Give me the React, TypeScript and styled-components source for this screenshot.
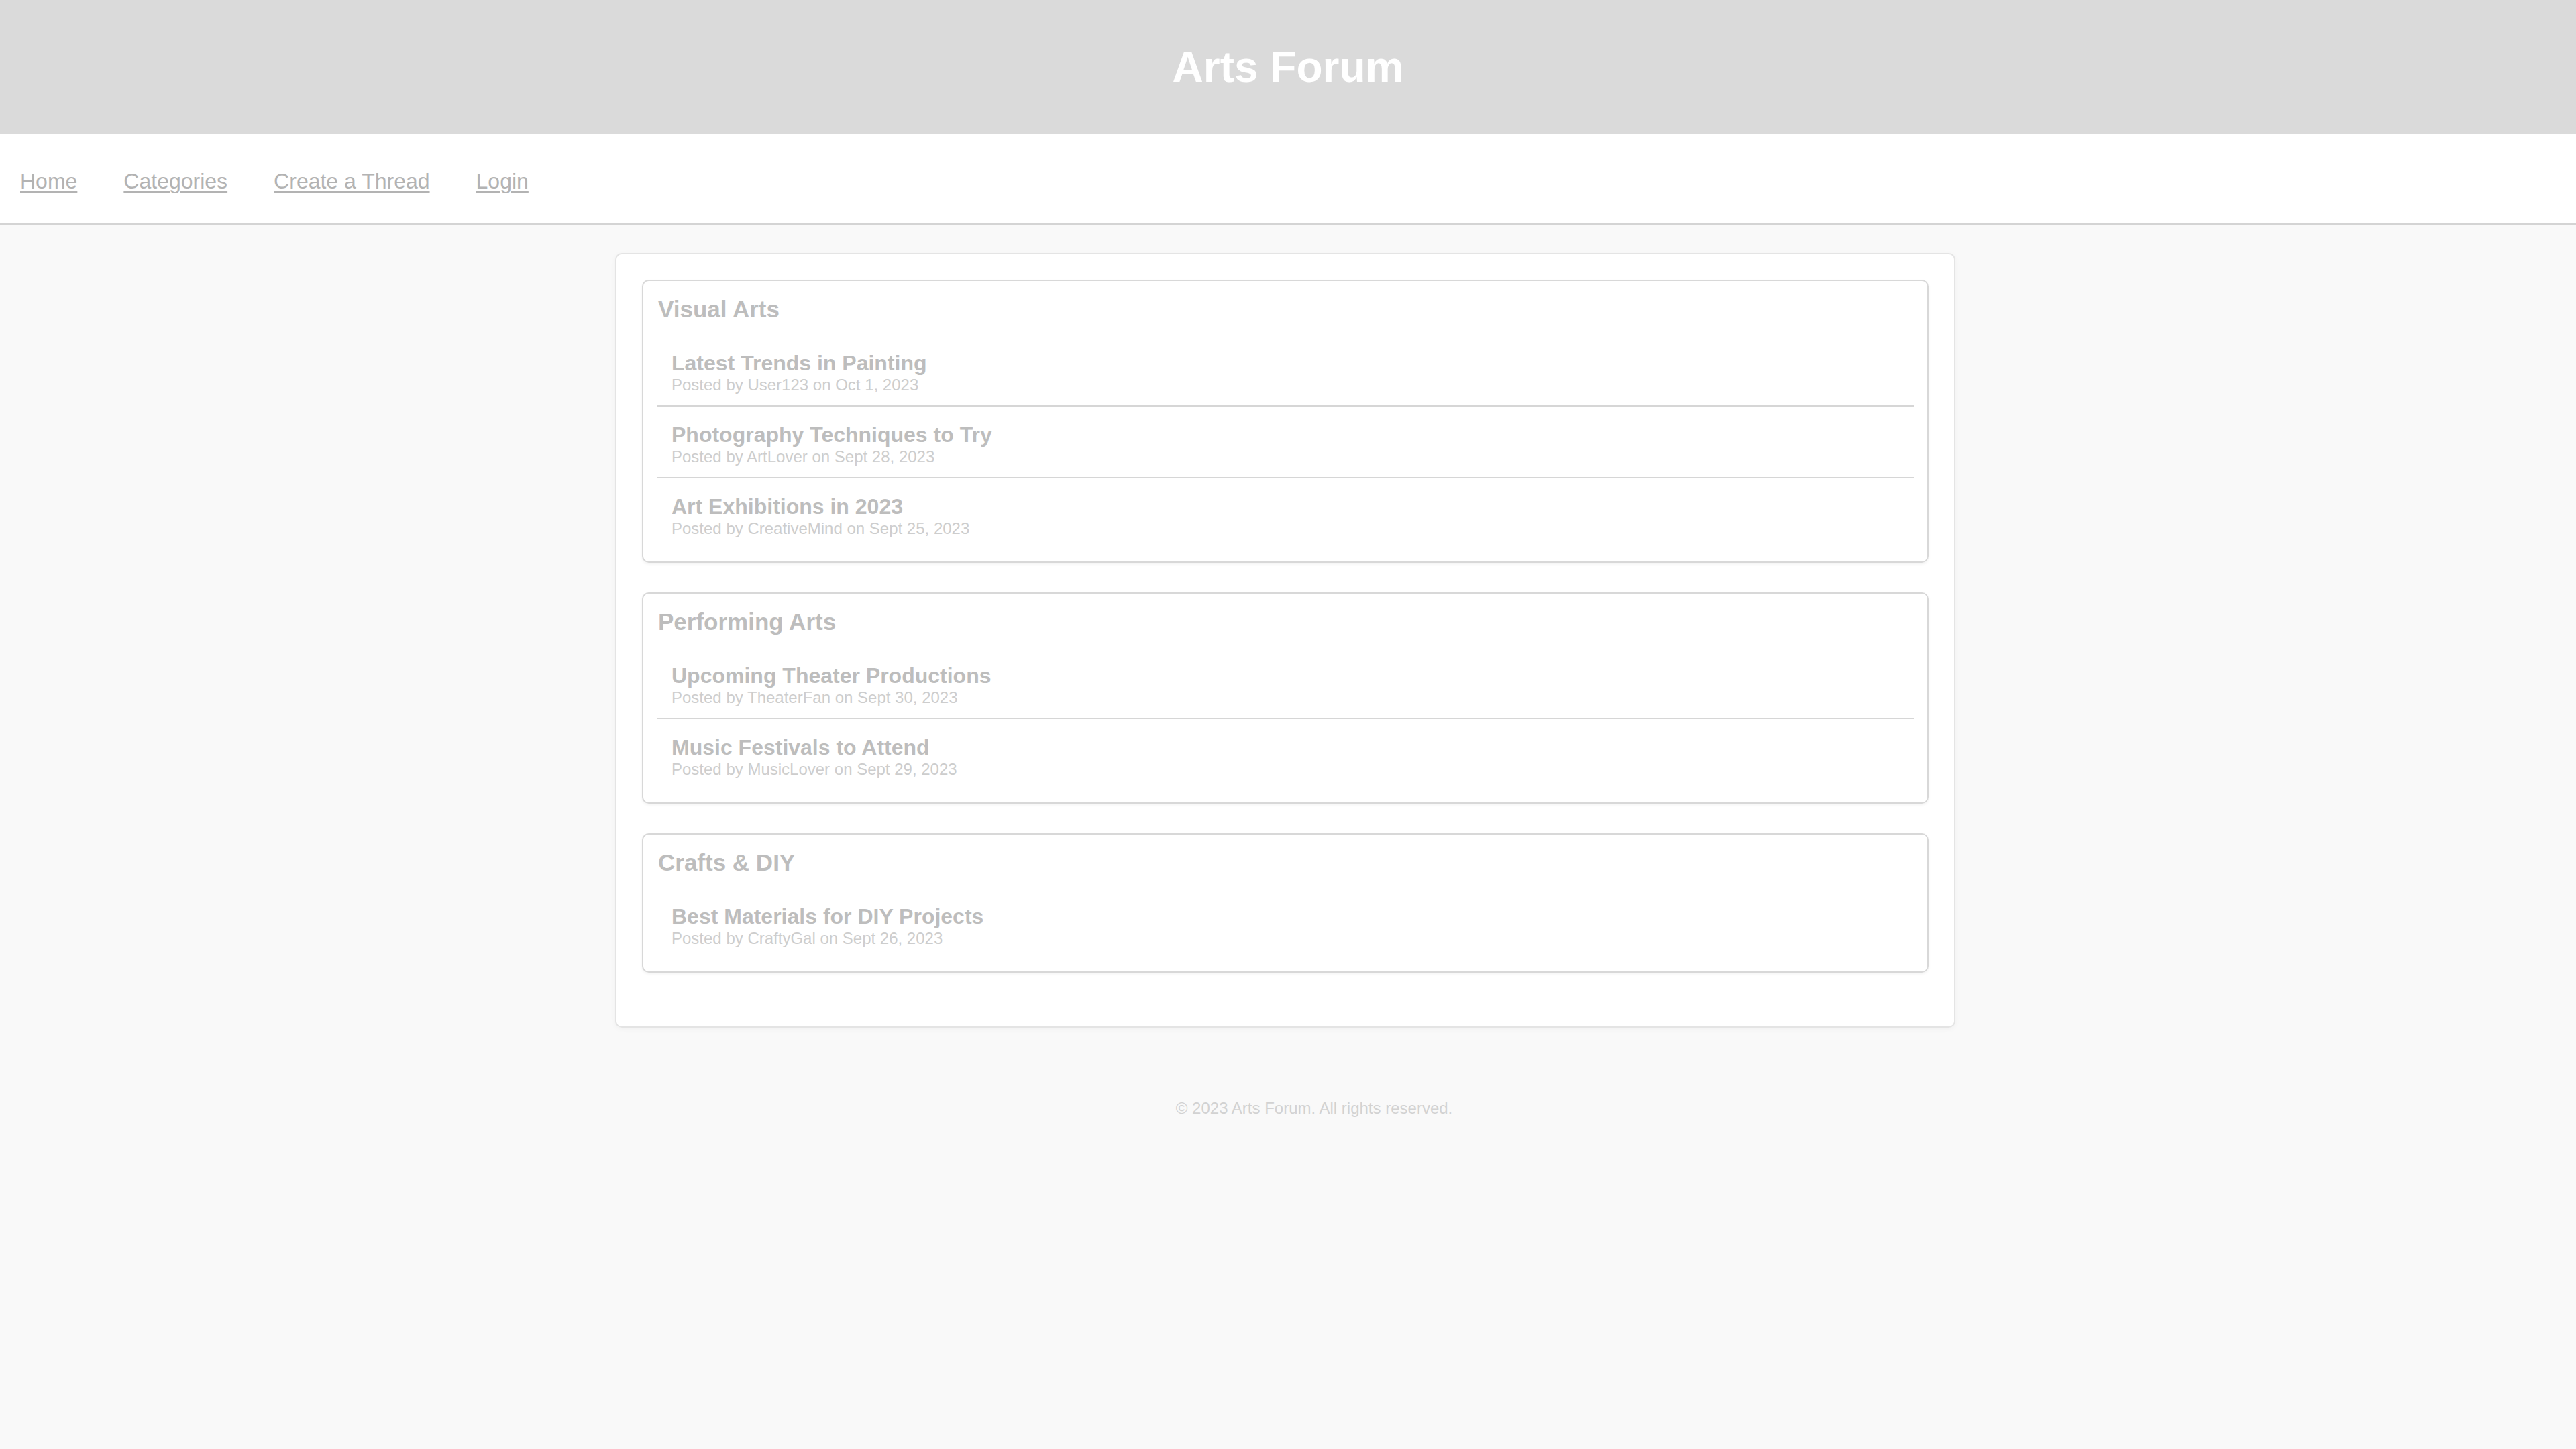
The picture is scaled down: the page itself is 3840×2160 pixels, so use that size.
import React from 'react';
import styled, { createGlobalStyle } from 'styled-components';

type Thread = {
   title: string;
   author: string;
   date: string;
};

type Category = {
   name: string;
   threads: Thread[];
};

const categories: Category[] = [
   {
      name: 'Visual Arts',
      threads: [
         { title: 'Latest Trends in Painting', author: 'User123', date: 'Oct 1, 2023' },
         { title: 'Photography Techniques to Try', author: 'ArtLover', date: 'Sept 28, 2023' },
         { title: 'Art Exhibitions in 2023', author: 'CreativeMind', date: 'Sept 25, 2023' },
      ],
   },
   {
      name: 'Performing Arts',
      threads: [
         { title: 'Upcoming Theater Productions', author: 'TheaterFan', date: 'Sept 30, 2023' },
         { title: 'Music Festivals to Attend', author: 'MusicLover', date: 'Sept 29, 2023' },
      ],
   },
   {
      name: 'Crafts & DIY',
      threads: [
         { title: 'Best Materials for DIY Projects', author: 'CraftyGal', date: 'Sept 26, 2023' },
      ],
   },
];

const navLinks = ['Home', 'Categories', 'Create a Thread', 'Login'];

const App = () => {
   return (
      <>
         <GlobalStyle />
         <Header>
            <Title>Arts Forum</Title>
         </Header>
         <Nav>
            {navLinks.map((link) => (
               <NavLink key={link} href="#">
                  {link}
               </NavLink>
            ))}
         </Nav>
         <Main>
            {categories.map((cat) => (
               <CategoryCard key={cat.name}>
                  <CategoryTitle>{cat.name}</CategoryTitle>
                  <ThreadList>
                     {cat.threads.map((t) => (
                        <ThreadItem key={t.title}>
                           <ThreadTitle>{t.title}</ThreadTitle>
                           <ThreadMeta>
                              Posted by {t.author} on {t.date}
                           </ThreadMeta>
                        </ThreadItem>
                     ))}
                  </ThreadList>
               </CategoryCard>
            ))}
         </Main>
         <Footer>© 2023 Arts Forum. All rights reserved.</Footer>
      </>
   );
};

export default App;

const GlobalStyle = createGlobalStyle`
   * {
      box-sizing: border-box;
   }
   body {
      margin: 0;
      background: #f9f9f9;
      font-family: 'Liberation Sans', Arial, sans-serif;
   }
`;

const Header = styled.header`
   height: 200px;
   background: #dadada;
   display: flex;
   align-items: center;
   justify-content: center;
`;
const Title = styled.h1`
   margin: 0;
   color: #ffffff;
   font-size: 64px;
   font-weight: 700;
`;
const Nav = styled.nav`
   height: 135px;
   background: #ffffff;
   border-bottom: 2px solid #d4d4d4;
   display: flex;
   align-items: center;
   padding: 8px 0 0 30px;
   gap: 69px;
`;
const NavLink = styled.a`
   color: #b3b3b3;
   font-size: 32px;
   text-decoration: underline;
   text-decoration-thickness: 2px;
   text-underline-offset: 4px;
`;
const Main = styled.main`
   width: 1998px;
   margin: 42px 0 0 calc(50% - 1003px);
   padding: 38px 38px 0;
   background: #ffffff;
   border: 2px solid #e4e4e4;
   border-radius: 10px;
   box-shadow: 0 2px 8px rgba(0, 0, 0, 0.04);
   display: flow-root;
`;
const CategoryCard = styled.section`
   border: 2px solid #d8d8d8;
   border-radius: 10px;
   box-shadow: 0 2px 4px rgba(0, 0, 0, 0.05);
   padding: 22px 20px 19px;
   margin-bottom: 44px;
   &:last-child {
      margin-bottom: 80px;
   }
`;
const CategoryTitle = styled.h2`
   margin: 0 0 18px 2px;
   color: #bdbdbd;
   font-size: 35px;
   font-weight: 700;
   line-height: 40px;
`;
const ThreadList = styled.ul`
   list-style: none;
   margin: 0;
   padding: 0;
`;
const ThreadItem = styled.li`
   padding: 24px 22px 16px;
   border-bottom: 2px solid #d6d6d6;
   &:last-child {
      border-bottom: none;
   }
`;
const ThreadTitle = styled.div`
   color: #bdbdbd;
   font-size: 32px;
   font-weight: 700;
   line-height: 37px;
`;
const ThreadMeta = styled.div`
   color: #cdcdcd;
   font-size: 24px;
   line-height: 28px;
`;
const Footer = styled.footer`
   margin-top: 106px;
   padding-left: 78px;
   text-align: center;
   color: #d2d2d2;
   font-size: 24px;
`;
